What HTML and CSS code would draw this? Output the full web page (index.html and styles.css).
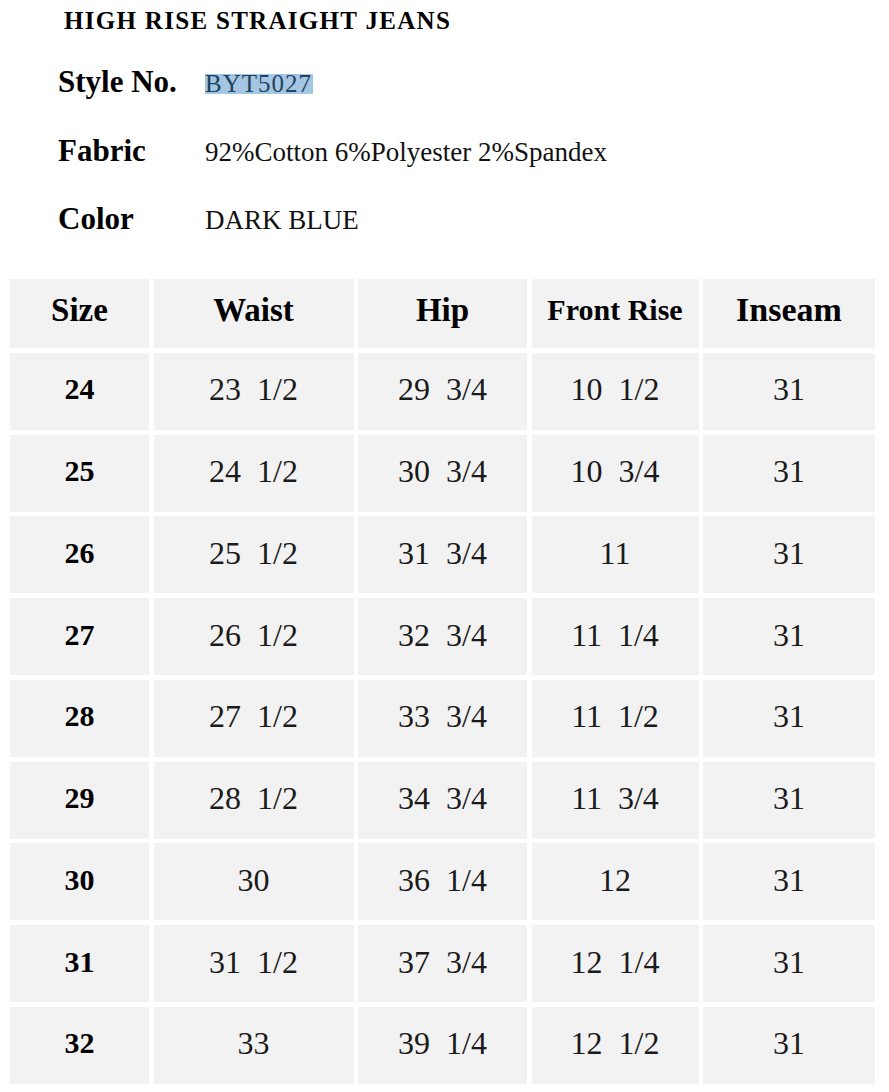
FILE: index.html
```html
<!DOCTYPE html>
<html lang="en">
<head>
<meta charset="utf-8">
<title>High Rise Straight Jeans – Size Chart</title>
<link rel="stylesheet" href="styles.css">
</head>
<body>
<main class="sheet">
  <h1 class="title">HIGH RISE STRAIGHT JEANS</h1>
  <dl class="specs">
    <div class="spec">
      <dt class="spec-label">Style No.</dt>
      <dd class="spec-value"><span class="selected">BYT5027</span></dd>
    </div>
    <div class="spec">
      <dt class="spec-label">Fabric</dt>
      <dd class="spec-value">92%Cotton 6%Polyester 2%Spandex</dd>
    </div>
    <div class="spec">
      <dt class="spec-label">Color</dt>
      <dd class="spec-value">DARK BLUE</dd>
    </div>
  </dl>

  <div class="chart" role="table">
    <div class="cell head h-size">Size</div>
    <div class="cell head">Waist</div>
    <div class="cell head">Hip</div>
    <div class="cell head h-rise">Front Rise</div>
    <div class="cell head h-inseam">Inseam</div>

    <div class="cell size">24</div><div class="cell">23  1/2</div><div class="cell">29  3/4</div><div class="cell">10  1/2</div><div class="cell">31</div>
    <div class="cell size">25</div><div class="cell">24  1/2</div><div class="cell">30  3/4</div><div class="cell">10  3/4</div><div class="cell">31</div>
    <div class="cell size">26</div><div class="cell">25  1/2</div><div class="cell">31  3/4</div><div class="cell">11</div><div class="cell">31</div>
    <div class="cell size">27</div><div class="cell">26  1/2</div><div class="cell">32  3/4</div><div class="cell">11  1/4</div><div class="cell">31</div>
    <div class="cell size">28</div><div class="cell">27  1/2</div><div class="cell">33  3/4</div><div class="cell">11  1/2</div><div class="cell">31</div>
    <div class="cell size">29</div><div class="cell">28  1/2</div><div class="cell">34  3/4</div><div class="cell">11  3/4</div><div class="cell">31</div>
    <div class="cell size">30</div><div class="cell">30</div><div class="cell">36  1/4</div><div class="cell">12</div><div class="cell">31</div>
    <div class="cell size">31</div><div class="cell">31  1/2</div><div class="cell">37  3/4</div><div class="cell">12  1/4</div><div class="cell">31</div>
    <div class="cell size">32</div><div class="cell">33</div><div class="cell">39  1/4</div><div class="cell">12  1/2</div><div class="cell">31</div>
  </div>
</main>
</body>
</html>
```

FILE: styles.css
```css
* { box-sizing: border-box; }

html, body {
  margin: 0;
  padding: 0;
  background: #ffffff;
}

body {
  font-family: "Liberation Serif", "Times New Roman", serif;
  color: #111111;
}

.sheet {
  width: 889px;
  padding-top: 9px;
}

.title {
  margin: 0 0 0 64px;
  font-size: 25px;
  line-height: 24px;
  font-weight: 700;
  letter-spacing: 1.3px;
  color: #000;
}

.specs {
  margin: 33px 0 0 58px;
  padding: 0;
  display: grid;
  row-gap: 37.5px;
}

.spec {
  display: flex;
  align-items: baseline;
  height: 31px;
}

.spec-label {
  width: 147px;
  flex: none;
  font-size: 31px;
  line-height: 1;
  font-weight: 700;
  color: #000;
}

.spec-value {
  margin: 0;
  font-size: 27px;
  line-height: 1;
  color: #111;
}

.selected {
  display: inline-block;
  height: 20px;
  line-height: 20px;
  font-size: 25px;
  letter-spacing: 1px;
  padding: 0 1px 0 0;
  background: #a3c6e2;
  color: #24425e;
}

.chart {
  margin: 45px 0 0 10px;
  display: grid;
  grid-template-columns: 139px 200px 169px 167px 172px;
  grid-template-rows: 69px;
  grid-auto-rows: 77px;
  column-gap: 4.5px;
  row-gap: 4.75px;
  width: 865px;
}

.cell {
  background: #f2f2f2;
  display: flex;
  align-items: center;
  justify-content: center;
  white-space: pre;
  font-size: 32px;
  line-height: 1;
  padding-bottom: 4px;
  color: #1a1a1a;
}

.cell.head {
  font-weight: 700;
  font-size: 33px;
  padding-bottom: 7px;
  color: #000;
}

.cell.h-rise { font-size: 30px; }
.cell.h-inseam { font-size: 34px; }

.cell.size {
  font-weight: 700;
  font-size: 30px;
  color: #000;
}
```
